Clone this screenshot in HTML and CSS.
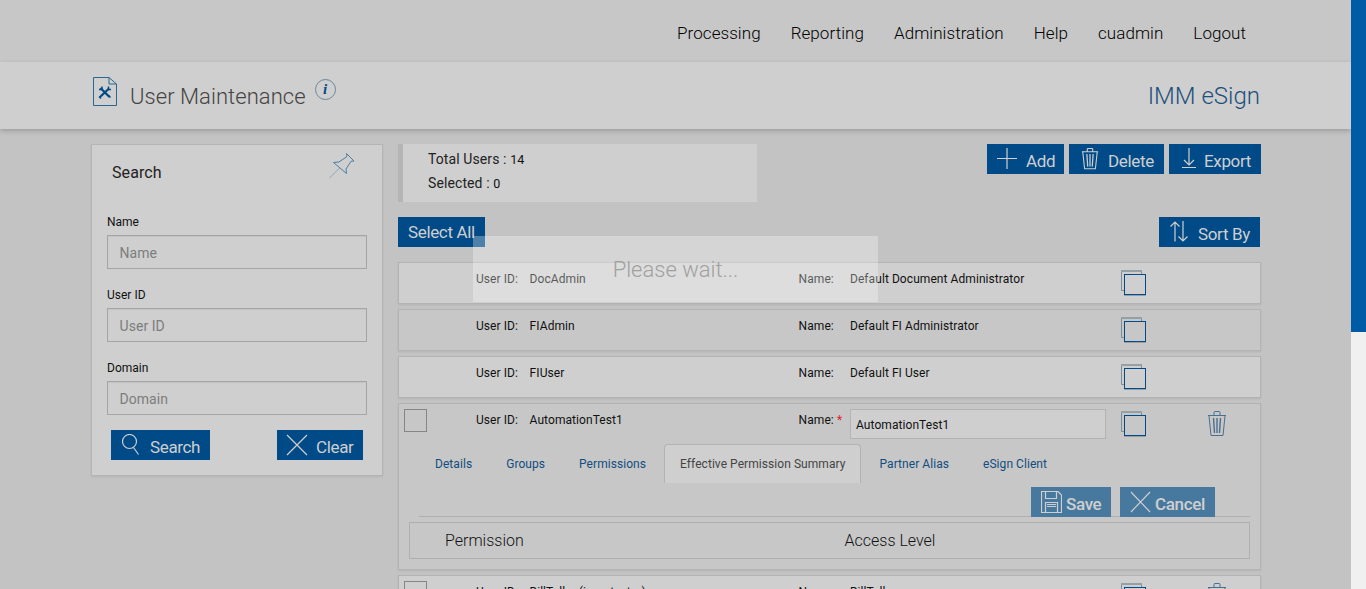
FILE: index.html
```html
<!DOCTYPE html>
<html lang="en">
  <head>
    <meta charset="utf-8">
    <title>User Maintenance</title>
    <link rel="stylesheet" href="styles.css">
  </head>
  <body>
    <svg class="sprite" xmlns="http://www.w3.org/2000/svg">
      <symbol id="copy" viewBox="0 0 27 28">
        <path d="M4 20.500H1.500V1H21.500V4" stroke="#788da0" />
        <path d="M1 1H22" stroke="#93a0a4" stroke-width="2" />
        <rect x="4.500" y="4.500" width="21" height="20" stroke="#004b87" />
        <path d="M4 25.500H26" stroke="#93a0a4" />
      </symbol>
      <symbol id="trash" viewBox="0 0 20 26">
        <path d="M1 4.500H19M7 4V1.500Q7 .5 8 .5H12Q13 .5 13 1.500V4M2 5 4 24.500H16L18 5" />
        <path d="M6.500 7 7.500 22M10 7V22M13.500 7 12.500 22" stroke-width="1.400" />
      </symbol>
      <symbol id="cross" viewBox="0 0 22 22">
        <path d="M1 1 21 21M21 1 1 21" />
      </symbol>
    </svg>

    <div class="page">
      <nav class="topnav">
        <a>Processing</a>
        <a>Reporting</a>
        <a>Administration</a>
        <a>Help</a>
        <a>cuadmin</a>
        <a>Logout</a>
      </nav>

      <header class="titlebar">
        <svg class="doc-icon" width="25" height="30" viewBox="0 0 25 30" fill="none" stroke="#2b6691">
          <path d="M1.500 .5H17L24.500 7V28.500H1.500ZM17 .5V7H24.500" />
          <path d="M8.500 11 17.500 20M17 11.500 8 20" stroke="#004b87" stroke-width="2.200" />
          <path d="M7 12.500H10V9.500M16.500 9.500V12.500H19M7 19.500 9 21.500M16.500 18.500 18.500 20.500" stroke="#004b87" stroke-width="1.500" />
        </svg>
        <h1>User Maintenance</h1>
        <span class="info">i</span>
        <span class="brand">IMM eSign</span>
      </header>

      <div class="content">
        <form class="search">
          <div class="search-head">
            <h2>Search</h2>
            <svg width="27" height="27" viewBox="0 0 27 27" fill="none" stroke="#4d7da1">
              <path d="M17.500 1.500 25 9 22 9.300 17 17 17.500 21.500 4.500 10.500 10 10 18 4.500Z" />
              <path d="M10.500 16 .5 26" stroke="#8fa5b2" />
            </svg>
          </div>
          <label>Name</label>
          <input type="text" placeholder="Name">
          <label>User ID</label>
          <input type="text" placeholder="User ID">
          <label>Domain</label>
          <input type="text" placeholder="Domain">
          <div class="search-actions">
            <button type="button" class="btn btn-search">
              <svg width="18" height="22" viewBox="0 0 18 22"><circle cx="8.500" cy="7.500" r="7" /><path d="M12.500 13.500 17.500 20.500" /></svg>
              <span>Search</span>
            </button>
            <button type="button" class="btn btn-clear">
              <svg width="22" height="22"><use href="#cross" /></svg>
              <span>Clear</span>
            </button>
          </div>
        </form>

        <main class="users">
          <div class="summary-bar">
            <div class="summary">
              <div>Total Users : <span>14</span></div>
              <div>Selected : <span>0</span></div>
            </div>
            <div class="actions">
              <button class="btn btn-add">
                <svg width="20" height="21" viewBox="0 0 20 21"><path d="M0 10.500H20M10 0V21" /></svg>
                <span>Add</span>
              </button>
              <button class="btn btn-delete">
                <svg width="18" height="22" viewBox="0 0 20 26" preserveAspectRatio="none"><use href="#trash" /></svg>
                <span>Delete</span>
              </button>
              <button class="btn btn-export">
                <svg width="14" height="21" viewBox="0 0 14 21"><path d="M7 0V17M2 12 7 17 12 12M0 19.500H14" /></svg>
                <span>Export</span>
              </button>
            </div>
          </div>

          <div class="list-bar">
            <button class="btn btn-all"><span>Select All</span></button>
            <button class="btn btn-sort">
              <svg width="18" height="22" viewBox="0 0 18 22"><path d="M5 20.500V1.500M.5 5.500 5 1 9.500 5.500M13 0V19.500M8.500 15.500 13 20 17.500 15.500" /></svg>
              <span>Sort By</span>
            </button>
          </div>

          <div class="row">
            <div class="fields">
              <span></span>
              <span>User ID:</span><span>DocAdmin</span>
              <span>Name:</span><span>Default Document Administrator</span>
              <svg class="copy"><use href="#copy" /></svg>
            </div>
          </div>
          <div class="row alt">
            <div class="fields">
              <span></span>
              <span>User ID:</span><span>FIAdmin</span>
              <span>Name:</span><span>Default FI Administrator</span>
              <svg class="copy"><use href="#copy" /></svg>
            </div>
          </div>
          <div class="row">
            <div class="fields">
              <span></span>
              <span>User ID:</span><span>FIUser</span>
              <span>Name:</span><span>Default FI User</span>
              <svg class="copy"><use href="#copy" /></svg>
            </div>
          </div>
          <div class="row alt open">
            <div class="fields">
              <i class="check"></i>
              <span>User ID:</span><span>AutomationTest1</span>
              <span>Name: <b class="req">*</b></span>
              <input class="name-input" type="text" value="AutomationTest1">
              <svg class="copy"><use href="#copy" /></svg>
              <svg class="trash"><use href="#trash" /></svg>
            </div>
            <div class="tabs">
              <a>Details</a>
              <a>Groups</a>
              <a>Permissions</a>
              <a class="active">Effective Permission Summary</a>
              <a>Partner Alias</a>
              <a>eSign Client</a>
            </div>
            <div class="toolbar">
              <button class="btn btn-save">
                <svg width="21" height="22" viewBox="0 0 21 22"><path d="M.5.5H17L20.500 4V21.500H.5ZM4.500 1V7.500H15.500V1M4.500 21V11.500H16.500V21M6 15.500H15M6 13.500H15" /></svg>
                <span>Save</span>
              </button>
              <button class="btn btn-cancel">
                <svg width="21" height="22" viewBox="0 0 22 22" preserveAspectRatio="none"><use href="#cross" /></svg>
                <span>Cancel</span>
              </button>
            </div>
            <div class="perm-head">
              <span>Permission</span>
              <span>Access Level</span>
            </div>
          </div>
          <div class="row">
            <div class="fields">
              <i class="check"></i>
              <span>User ID:</span><span>BillTeller (imm tester)</span>
              <span>Name:</span><span>BillTeller</span>
              <svg class="copy"><use href="#copy" /></svg>
              <svg class="trash"><use href="#trash" /></svg>
            </div>
          </div>
        </main>
      </div>
    </div>

    <div class="scrollbar"><div class="thumb"></div></div>
    <div class="wait">Please wait...</div>
  </body>
</html>
```

FILE: styles.css
```css
* {
  box-sizing: border-box;
}
body {
  margin: 0;
  height: 589px;
  overflow: hidden;
  display: flex;
  background: #c3c3c3;
  color: #111;
  font-family: Roboto, "Liberation Sans", sans-serif;
  font-size: 12px;
}
.sprite {
  display: none;
}
svg {
  fill: none;
}
.page {
  width: 1351px;
  height: 589px;
  overflow: hidden;
}
.scrollbar {
  width: 15px;
  background: #f0f0f0;
}
.thumb {
  height: 332px;
  background: #005ba7;
}

/* header */
.topnav {
  height: 62px;
  padding: 4px 105px 0 0;
  display: flex;
  justify-content: flex-end;
  align-items: center;
  gap: 30px;
  background: #c7c7c7;
  font-size: 17px;
  font-weight: 300;
  letter-spacing: 0.06px;
  color: #000;
}
.titlebar {
  position: relative;
  height: 67px;
  padding: 0 91px 0 92px;
  display: flex;
  align-items: flex-start;
  background: #cfcfcf;
  box-shadow: 0 2px 5px rgba(0, 0, 0, 0.2);
}
.doc-icon {
  margin-top: 15px;
}
h1 {
  margin: 21px 0 0 13px;
  font-size: 22px;
  line-height: 28px;
  font-weight: 300;
  letter-spacing: 0.05px;
  color: #444;
}
.info {
  width: 21px;
  height: 21px;
  margin: 17px 0 0 9px;
  border: 1px solid #69869c;
  border-radius: 50%;
  font: italic bold 15px/19px "Liberation Serif", serif;
  text-align: center;
  color: #004b87;
}
.brand {
  margin: 20px 0 0 auto;
  font-size: 24px;
  line-height: 28px;
  font-weight: 300;
  color: #1d4f7c;
}
.content {
  padding: 15px 90px 0 91px;
  display: flex;
  align-items: flex-start;
  gap: 15px;
}

/* buttons */
.btn {
  height: 30px;
  padding: 0 0 0 10px;
  border: 0;
  display: flex;
  align-items: flex-start;
  background: #004b87;
  color: #cfcfcf;
  font-family: inherit;
  font-size: 17px;
  letter-spacing: -0.35px;
  white-space: nowrap;
}
.btn svg {
  flex: none;
  margin-top: 4px;
  stroke: #cfcfcf;
  stroke-width: 1.2;
}
.btn span {
  margin: 7px 0 0 9px;
  line-height: 20px;
}
.btn-search {
  width: 99px;
}
.btn-search span {
  margin-left: 11px;
}
.btn-clear {
  width: 86px;
  padding-left: 9px;
}
.btn-clear span {
  margin-left: 8px;
}
.btn-add {
  width: 77px;
}
.btn-delete {
  width: 95px;
  padding-left: 12px;
}
.btn-export {
  width: 92px;
  padding-left: 13px;
}
.btn-export span {
  margin-left: 8px;
}
.btn-all {
  width: 87px;
}
.btn-all span {
  margin: 5px 0 0;
}
.btn-sort {
  width: 101px;
  padding-left: 11px;
}
.btn-sort span {
  margin-left: 10px;
}
.btn-save,
.btn-cancel {
  background: #47799f;
  font-weight: 500;
}
.btn-save {
  width: 80px;
}
.btn-save span,
.btn-cancel span {
  margin-left: 4px;
}
.btn-cancel {
  width: 95px;
}

/* search panel */
.search {
  width: 292px;
  height: 332px;
  padding: 0 15px;
  border: 1px solid #b5b5b5;
  background: #cfcfcf;
  box-shadow: 0 1px 2px rgba(0, 0, 0, 0.08);
}
.search-head {
  height: 68px;
  padding: 7px 11px 0 5px;
  display: flex;
  justify-content: space-between;
}
h2 {
  margin: 11px 0 0;
  font-size: 16px;
  line-height: 20px;
  font-weight: 400;
  letter-spacing: 0.1px;
  color: #222;
}
.search label {
  display: block;
  height: 22px;
  line-height: 19px;
}
.search input {
  display: block;
  width: 260px;
  height: 34px;
  margin-bottom: 17px;
  padding: 2px 11.5px 0;
  border: 1px solid #a5a5a5;
  background: transparent;
  box-shadow: inset 0 1px 1px rgba(0, 0, 0, 0.06);
  font: 14px Roboto, sans-serif;
  letter-spacing: 0.05px;
}
.search input::placeholder {
  color: #7d7d7d;
}
.search-actions {
  margin-top: -2px;
  padding: 0 4px;
  display: flex;
  justify-content: space-between;
}

/* user list */
.users {
  width: 863px;
}
.summary-bar {
  display: flex;
  justify-content: space-between;
  height: 73px;
}
.summary {
  width: 359px;
  height: 58px;
  padding: 3px 0 0 25px;
  border-left: 5px solid #b5b5b5;
  background: #cfcfcf;
  font-size: 14px;
  line-height: 24px;
  letter-spacing: 0.1px;
  color: #222;
}
.summary div {
  height: 24px;
}
.summary span {
  font-size: 12.5px;
  color: #111;
}
.actions {
  display: flex;
  gap: 5px;
}
.list-bar {
  height: 45px;
  padding-right: 1px;
  display: flex;
  justify-content: space-between;
}
.row {
  height: 42px;
  margin-bottom: 5px;
  border: 1px solid #b3b3b3;
  background: #cfcfcf;
  box-shadow: 0 1px 2px rgba(0, 0, 0, 0.08);
}
.alt {
  background: #c7c7c7;
}
.open {
  height: 167px;
}
.fields {
  height: 40px;
  padding: 5px 0 0 5px;
  display: grid;
  grid-template-columns: 72px 53.6px 269px 51.4px 270px 87px 1fr;
  align-items: start;
  line-height: 22px;
  letter-spacing: 0.07px;
  white-space: nowrap;
}
.check {
  width: 23px;
  height: 23px;
  border: 1px solid #858585;
}
.copy {
  width: 27px;
  height: 28px;
  margin-top: 2px;
}
.trash {
  width: 20px;
  height: 26px;
  margin-top: 2px;
  stroke: #4a6f90;
}
.req {
  color: #d22;
  font-weight: 400;
}
.name-input {
  width: 256px;
  height: 30px;
  padding: 1px 5px 0;
  border: 1px solid #b3b3b3;
  background: #cfcfcf;
  font: 12px Roboto, sans-serif;
  letter-spacing: 0.07px;
  color: #111;
}
.tabs {
  height: 39px;
  padding-left: 20px;
  display: flex;
  gap: 2px;
  line-height: 40px;
  letter-spacing: 0.06px;
  color: #124d7f;
}
.tabs a {
  padding: 0 16px;
}
.tabs .active {
  padding: 0 15px;
  border: 1px solid #b3b3b3;
  border-bottom: 0;
  border-radius: 4px 4px 0 0;
  background: #cfcfcf;
  line-height: 38px;
  color: #444;
}
.toolbar {
  height: 34px;
  margin: 0 10px 0 20px;
  padding: 4px 35px 0 0;
  display: flex;
  justify-content: flex-end;
  gap: 9px;
  border-bottom: 1px solid #afafaf;
}
.perm-head {
  height: 37px;
  margin: 5px 10px 0;
  padding-left: 35px;
  border: 1px solid #afafaf;
  display: grid;
  grid-template-columns: 399.5px 1fr;
  font-size: 16px;
  font-weight: 300;
  line-height: 35px;
}

/* loading message */
.wait {
  position: absolute;
  left: 473px;
  top: 236px;
  width: 405px;
  height: 66px;
  background: rgba(255, 255, 255, 0.3);
  color: #a0a0a0;
  font-size: 22px;
  font-weight: 300;
  line-height: 67px;
  text-align: center;
}
```
